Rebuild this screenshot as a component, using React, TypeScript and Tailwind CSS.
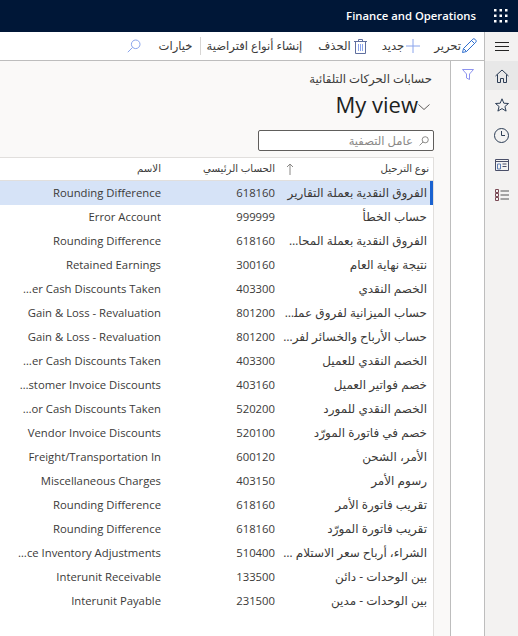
const rows = [
  ["الفروق النقدية بعملة التقارير", "618160", "Rounding Difference"],
  ["حساب الخطأ", "999999", "Error Account"],
  ["الفروق النقدية بعملة المحاسبة", "618160", "Rounding Difference"],
  ["نتيجة نهاية العام", "300160", "Retained Earnings"],
  ["الخصم النقدي", "403300", "Customer Cash Discounts Taken"],
  ["حساب الميزانية لفروق عمليات إعادة التقييم", "801200", "Gain & Loss - Revaluation"],
  ["حساب الأرباح والخسائر لفروق إعادة التقييم", "801200", "Gain & Loss - Revaluation"],
  ["الخصم النقدي للعميل", "403300", "Customer Cash Discounts Taken"],
  ["خصم فواتير العميل", "403160", "Customer Invoice Discounts"],
  ["الخصم النقدي للمورد", "520200", "Vendor Cash Discounts Taken"],
  ["خصم في فاتورة المورّد", "520100", "Vendor Invoice Discounts"],
  ["الأمر، الشحن", "600120", "Freight/Transportation In"],
  ["رسوم الأمر", "403150", "Miscellaneous Charges"],
  ["تقريب فاتورة الأمر", "618160", "Rounding Difference"],
  ["تقريب فاتورة المورّد", "618160", "Rounding Difference"],
  ["الشراء، أرباح سعر الاستلام المخزني", "510400", "Purchase Price Inventory Adjustments"],
  ["بين الوحدات - دائن", "133500", "Interunit Receivable"],
  ["بين الوحدات - مدين", "231500", "Interunit Payable"],
];

function Waffle() {
  return (
    <svg width="14" height="14" viewBox="0 0 14 14" fill="#fff">
      {[0, 5.500, 11].map((y) =>
        [0, 5.500, 11].map((x) => <rect key={`${x}-${y}`} x={x} y={y} width="2.500" height="2.500" />)
      )}
    </svg>
  );
}

function Hamburger() {
  return (
    <svg width="14" height="10" viewBox="0 0 14 10" stroke="#252423" strokeWidth="1">
      <path d="M0 .5h14M0 4.500h14M0 8.500h14" />
    </svg>
  );
}

function Pencil() {
  return (
    <svg width="16" height="16" viewBox="0 0 16 16" fill="none" stroke="#2f6fd0" strokeWidth="1">
      <path d="M1.500 14.500l1-4L11.800 1.200a1.500 1.500 0 0 1 2.100 0l.9.9a1.500 1.500 0 0 1 0 2.100L5.500 13.500z" />
      <path d="M10.500 2.500l3 3M2.500 10.500l3 3" />
    </svg>
  );
}

function Plus() {
  return (
    <svg width="14" height="14" viewBox="0 0 14 14" stroke="#8aa4ec" strokeWidth="1">
      <path d="M7 0v14M0 7h14" />
    </svg>
  );
}

function Trash() {
  return (
    <svg width="13" height="15" viewBox="0 0 13 15" fill="none" stroke="#5f6f9f" strokeWidth="1">
      <path d="M0 2.500h13M4.500 2.500V.5h4v2M1.500 2.500v12h10v-12" />
      <path d="M4.500 5v7M6.500 5v7M8.500 5v7" stroke="#8aa4ec" />
    </svg>
  );
}

function Search({ color, size }: { color: string; size: number }) {
  return (
    <svg width={size} height={size} viewBox="0 0 14 14" fill="none" stroke={color} strokeWidth="1">
      <circle cx="8.700" cy="5.300" r="4.300" />
      <path d="M5.700 8.300L.8 13.200" />
    </svg>
  );
}

function Funnel() {
  return (
    <svg width="12" height="11" viewBox="0 0 12 11" fill="none" stroke="#8d93ef" strokeWidth="1">
      <path d="M.5.5h11L7.500 5v5.500l-3-1.500V5z" />
    </svg>
  );
}

function Home() {
  return (
    <svg width="14" height="14" viewBox="0 0 14 14" fill="none" stroke="#2c3d55" strokeWidth="1">
      <path d="M.5 7L7 1l6.500 6M2.500 5.500v8h3v-4h3v4h3v-8" />
    </svg>
  );
}

function Star() {
  return (
    <svg width="14" height="14" viewBox="0 0 14 14" fill="none" stroke="#2c3d55" strokeWidth="1">
      <path d="M7 .8l1.800 4.400 4.700.3-3.600 3 1.200 4.600L7 10.600l-4.100 2.500 1.200-4.600-3.600-3 4.700-.3z" />
    </svg>
  );
}

function Clock() {
  return (
    <svg width="15" height="15" viewBox="0 0 15 15" fill="none" stroke="#2c3d55" strokeWidth="1">
      <circle cx="7.500" cy="7.500" r="7" />
      <path d="M7.500 3v4.500h3.500" />
    </svg>
  );
}

function Workspace() {
  return (
    <svg width="14" height="12" viewBox="0 0 14 12" fill="none" stroke="#4a4f68" strokeWidth="1">
      <path d="M.5.5h13v11H.5z" />
      <path d="M.5 2.500h13" />
      <path d="M2.500 5h3v5h-3z" stroke="#5f7fb5" />
      <path d="M7.500 5h4M7.500 7.500h4" />
    </svg>
  );
}

function ListIcon() {
  return (
    <svg width="14" height="12" viewBox="0 0 14 12" fill="none" stroke="#7a4a55" strokeWidth="1">
      <path d="M.5.500h3v3h-3zM.5 4.500h3v3h-3zM.5 8.500h3v3h-3z" />
      <path d="M5.500 2h8.500M5.500 6h8.500M5.500 10h8.500" stroke="#555" />
    </svg>
  );
}

export default function App() {
  return (
    <div
      dir="rtl"
      className="flex h-[636px] w-[518px] flex-col overflow-hidden bg-white text-[11.3px] text-[#3b3a39] font-['Open_Sans','DejaVu_Sans',sans-serif]"
    >
      <header className="flex h-8 shrink-0 items-center gap-[18px] bg-[#001737] pr-[10px] text-white">
        <Waffle />
        <span dir="ltr" className="text-[11.3px] font-semibold">Finance and Operations</span>
      </header>

      <div className="flex min-h-0 flex-1">
        <nav className="flex w-[33px] shrink-0 flex-col items-center bg-[#f3f2f1]">
          <div className="flex h-[29px] w-full items-center justify-center"><Hamburger /></div>
          <div className="flex h-[29px] w-full items-center justify-center bg-[#e8e8e8]"><Home /></div>
          <div className="flex h-[30px] w-full items-center justify-center"><Star /></div>
          <div className="flex h-[30px] w-full items-center justify-center"><Clock /></div>
          <div className="flex h-[29px] w-full items-center justify-center"><Workspace /></div>
          <div className="flex h-[31px] w-full items-center justify-center"><ListIcon /></div>
        </nav>

        <div className="flex min-w-0 flex-1 flex-col border-r border-[#bdbdbd]">
          <div className="flex h-[29px] shrink-0 items-center border-b border-[#bdbdbd] pr-[7px] text-[11.6px]">
            <Pencil />
            <span>تحرير</span>
            <div className="mr-[14px]"><Plus /></div>
            <span className="mr-[2px]">جديد</span>
            <div className="mr-[15px]"><Trash /></div>
            <span className="mr-[3px]">الحذف</span>
            <span className="mr-[16px]">إنشاء أنواع افتراضية</span>
            <div className="mr-[6px] border-r border-[#d8d6d4] pr-[7px] leading-[18px]">خيارات</div>
            <div className="mr-[18px]"><Search color="#8aa4ec" size={14} /></div>
          </div>

          <div className="flex min-h-0 flex-1">
            <div className="flex w-[34px] shrink-0 justify-center border-l border-[#bdbdbd] bg-white pt-[8px]">
              <Funnel />
            </div>

            <main className="flex min-w-0 flex-1 flex-col bg-[#faf9f8] pr-[16px]">
              <div className="mt-[8px] pr-[2px] text-[11.7px] leading-[18px]">حسابات الحركات التلقائية</div>
              <div className="mt-px flex h-[32px] items-center pr-[4px]">
                <svg width="12" height="6" viewBox="0 0 12 6" fill="none" stroke="#605e5c" strokeWidth="1" className="mt-[5px]">
                  <path d="M.5.5L6 5.500 11.500.5" />
                </svg>
                <span dir="ltr" className="text-[22px] leading-[32px] text-[#201f1e]">My view</span>
              </div>
              <div className="mt-[10px] flex h-[21px] w-[176px] items-center gap-[6px] rounded-[2px] border border-[#605e5c] bg-white pr-[4px] text-[11.6px] text-[#8a8886]">
                <Search color="#605e5c" size={10} />
                <span>عامل التصفية</span>
              </div>

              <div className="mt-[6px] min-h-0 flex-1 border-t border-r border-[#e1dfdd] bg-white">
                <div className="flex h-[23px] items-center border-b border-[#e1dfdd] text-[10.2px]">
                  <div className="flex w-[158px] shrink-0 items-center justify-between pr-[4px] pl-[11px]">
                    <span>نوع الترحيل</span>
                    <svg width="8" height="12" viewBox="0 0 8 12" fill="none" stroke="#8a8886" strokeWidth="1">
                      <path d="M4 12V1M1 4l3-3 3 3" />
                    </svg>
                  </div>
                  <div className="w-[114px] shrink-0">الحساب الرئيسي</div>
                  <div className="min-w-0 flex-1">الاسم</div>
                </div>
                {rows.map(([type, account, name], i) => (
                  <div
                    key={i}
                    className={`flex h-[24px] items-center border-r-[3px] leading-[24px] ${
                      i === 0 ? "border-[#1a62d0] bg-[#d6e3f7]" : "border-transparent"
                    }`}
                  >
                    <div className="w-[155px] shrink-0 truncate pr-[3px] pl-[8px] text-[12px]">{type}</div>
                    <div className="w-[114px] shrink-0">{account}</div>
                    <div className="min-w-0 flex-1 truncate pl-[18px]">{name}</div>
                  </div>
                ))}
              </div>
            </main>
          </div>
        </div>
      </div>
    </div>
  );
}
